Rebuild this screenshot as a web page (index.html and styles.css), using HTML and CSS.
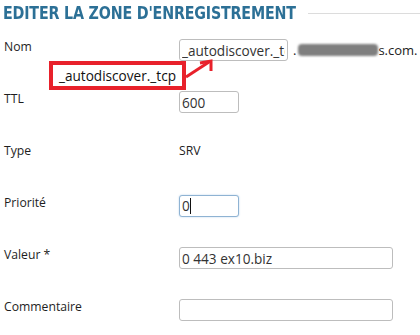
FILE: index.html
```html
<!DOCTYPE html>
<html lang="fr">
<head>
<meta charset="utf-8">
<title>Editer la zone d'enregistrement</title>
<link rel="stylesheet" href="styles.css">
</head>
<body>
<div class="page">
  <div class="header">
    <h1 class="title">EDITER LA ZONE D'ENREGISTREMENT</h1>
    <div class="rule"></div>
  </div>
  <div class="form">
    <div class="label">Nom</div>
    <div class="field name-field">
      <input class="input input-name" type="text" value="_autodiscover._tcp">
      <span class="domain">.<span class="blur"></span>s.com.</span>
    </div>

    <div class="label">TTL</div>
    <div class="field"><input class="input input-short" type="text" value="600"></div>

    <div class="label">Type</div>
    <div class="field"><span class="static">SRV</span></div>

    <div class="label">Priorité</div>
    <div class="field"><div class="input input-short focused">0<span class="caret"></span></div></div>

    <div class="label">Valeur *</div>
    <div class="field"><input class="input input-long" type="text" value="0 443 ex10.biz"></div>

    <div class="label">Commentaire</div>
    <div class="field"><input class="input input-long" type="text" value=""></div>
  </div>

  <div class="callout">_autodiscover._tcp</div>
  <svg class="arrow" width="40" height="40" viewBox="0 0 40 40">
    <path d="M2 20 L25 5" stroke="#e8212b" stroke-width="3" fill="none"/>
    <path d="M16 6 L27 4 L27 14" stroke="#e8212b" stroke-width="3" fill="none"/>
  </svg>
</div>
</body>
</html>
```
FILE: styles.css
```css
html, body {
  margin: 0;
  padding: 0;
  background: #ffffff;
}
.page {
  position: relative;
  width: 420px;
  height: 335px;
  overflow: hidden;
  font-family: "Open Sans", "DejaVu Sans", sans-serif;
  color: #222;
}
.header {
  display: flex;
  align-items: center;
  height: 26px;
  padding-left: 3px;
}
.title {
  margin: 0;
  width: 290px;
  font-family: "DejaVu Sans Condensed", "DejaVu Sans", sans-serif;
  font-stretch: condensed;
  font-weight: bold;
  font-size: 18px;
  line-height: 26px;
  color: #2c7096;
  white-space: nowrap;
  letter-spacing: -0.2px;
  transform: scaleX(0.88);
  transform-origin: left center;
}
.rule {
  flex: 1;
  height: 1px;
  background: #dcdcdc;
  margin-left: 15px;
}
.form {
  display: grid;
  grid-template-columns: 175px 1fr;
  grid-auto-rows: 52px;
  padding-left: 4px;
  margin-top: 13px;
  align-items: start;
}
.label {
  font-size: 12.2px;
  line-height: 16px;
  color: #1e1e1e;
}
.field {
  display: flex;
  align-items: center;
}
.input {
  box-sizing: border-box;
  height: 22px;
  border: 1px solid #bdbdbd;
  border-radius: 3px;
  padding: 0 2px;
  margin: 0;
  font-family: "Open Sans", sans-serif;
  font-size: 13.6px;
  color: #333;
  background: #fff;
  outline: none;
}
.input-name { width: 109px; }
.input-short { width: 60px; }
.input-long { width: 214px; }
.focused {
  display: flex;
  align-items: center;
  border-color: #8fb3d3;
  box-shadow: 0 0 2px #b8d2ea;
  line-height: 20px;
}
.caret {
  display: inline-block;
  width: 1px;
  height: 16px;
  background: #111;
}
.domain {
  margin-left: 5px;
  font-size: 13px;
  color: #222;
  display: inline-flex;
  align-items: center;
}
.blur {
  display: inline-block;
  width: 80px;
  height: 12px;
  margin-left: 2px;
  background: #7f7f7f;
  border-radius: 4px;
  filter: blur(0.8px);
}
.static {
  font-size: 12.2px;
  line-height: 16px;
  color: #222;
}
.callout {
  position: absolute;
  left: 49px;
  top: 61px;
  width: 137px;
  height: 29px;
  box-sizing: border-box;
  border: 4px solid #e8212b;
  font-family: "Open Sans", sans-serif;
  font-size: 13.6px;
  line-height: 21px;
  padding-left: 6px;
  color: #111;
}
.arrow {
  position: absolute;
  left: 184px;
  top: 57px;
}
```
